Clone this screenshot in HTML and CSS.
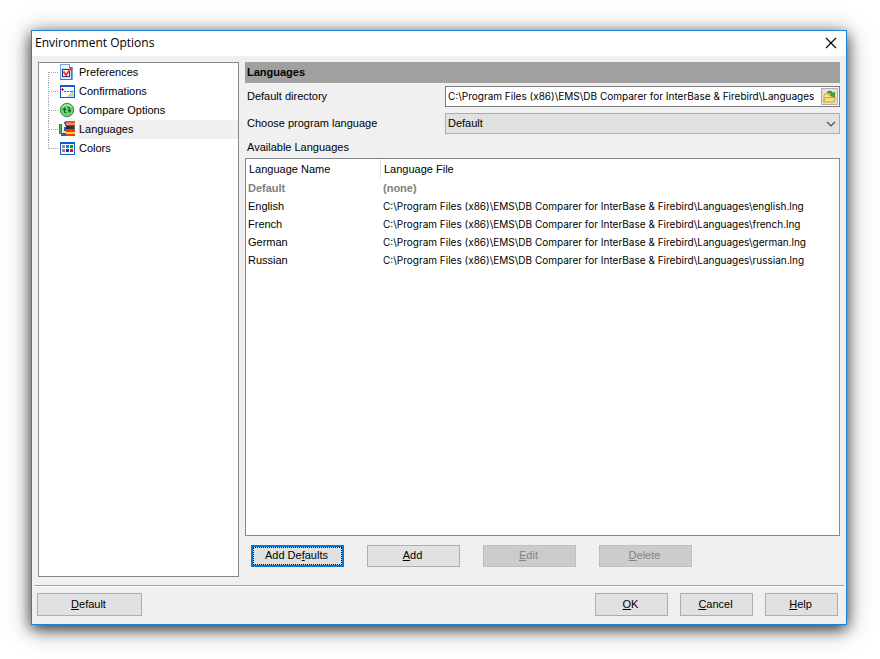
FILE: index.html
```html
<!DOCTYPE html>
<html lang="en">
<head>
<meta charset="utf-8">
<title>Environment Options</title>
<link rel="stylesheet" href="styles.css">
</head>
<body>
<main class="dialog">
  <header class="titlebar">
    <h1 class="title">Environment Options</h1>
    <button class="close" type="button" aria-label="Close">
      <svg width="12" height="12" viewBox="0 0 12 12"><path d="M1 1L11 11M11 1L1 11" stroke="#000" stroke-width="1.1" fill="none"/></svg>
    </button>
  </header>

  <div class="content">
    <nav class="tree" aria-label="Option pages">
      <ul class="tree-list">
        <li class="node"><a class="node-link" href="#preferences">
          <svg class="icon" width="18" height="18" viewBox="0 0 18 18" shape-rendering="crispEdges">
            <path d="M2.500 1.500h9l3 3v12h-12z" fill="#d6e6fb" stroke="#7f9fe0"/>
            <path d="M3 2h8v3H3z" fill="#f4f9ff"/>
            <path d="M11.500 1.500v3h3" fill="#fff" stroke="#5b86dc"/>
            <path d="M14 5v12H2v-1h11V5z" fill="#4a72cc"/>
            <rect x="4.500" y="6.500" width="7" height="7" fill="#fff" stroke="#0a3c9c"/>
            <path d="M5.500 8.500l2.500 3.500L13.500 4.500" fill="none" stroke="#f23a16" stroke-width="2" shape-rendering="auto"/>
          </svg>
          <span class="node-text">Preferences</span></a></li>
        <li class="node"><a class="node-link" href="#confirmations">
          <svg class="icon" width="18" height="18" viewBox="0 0 18 18" shape-rendering="crispEdges">
            <rect x="2" y="3" width="15" height="13" fill="#0b5fce"/>
            <rect x="3" y="5" width="13" height="10" fill="#fff"/>
            <path d="M16 8v7H8z" fill="#c4e2fb"/>
            <path d="M3 7h3v1H3zM4 6h1v3H4z" fill="#f20c18"/>
            <path d="M6 9h2v1H6zM9 9h2v1H9zM12 9h3v1h-3z" fill="#52627c"/>
            <path d="M14 11h1v3h-4v-1h3z" fill="#e6cf18"/>
          </svg>
          <span class="node-text">Confirmations</span></a></li>
        <li class="node"><a class="node-link" href="#compare">
          <svg class="icon" width="18" height="18" viewBox="0 0 18 18">
            <circle cx="9" cy="9" r="6.700" fill="#71cf76" stroke="#279238"/>
            <path d="M4.500 6Q9 1.500 13.500 6" fill="none" stroke="#a8e9a3" stroke-width="1.500"/>
            <path d="M8.500 11.500H7.500Q6.500 11.500 6.500 10.500V8M9.500 6.500H10.500Q11.500 6.500 11.500 7.500V10" fill="none" stroke="#126322" stroke-width="1.200"/>
            <path d="M4.500 9l2-3 2 3zM9.500 9l2 3 2-3z" fill="#126322"/>
          </svg>
          <span class="node-text">Compare Options</span></a></li>
        <li class="node node-selected"><a class="node-link" href="#languages" aria-current="page">
          <svg class="icon" width="18" height="18" viewBox="0 0 18 18" shape-rendering="crispEdges">
            <path d="M7 1h10v2H7z" fill="#f45132"/><path d="M7 3h10v2H7z" fill="#fa8b68"/>
            <path d="M6 2h2v4H6z" fill="#1d62e0"/>
            <path d="M1 4h4v10H1z" fill="#19923a"/><path d="M2 5h1v8H2z" fill="#3ebd55"/>
            <path d="M4 4h3v10H4z" fill="#f5f6ff"/>
            <path d="M3 13h5v3H3zM6 7h2v4H6z" fill="#1b5fe0"/>
            <path d="M5 11h3v2H5z" fill="#f6e45c"/>
            <path d="M7 5h10v1H7z" fill="#e92515"/>
            <path d="M8 6h9v3H8z" fill="#333030"/><path d="M8 9h9v3H8z" fill="#e2401a"/>
            <path d="M8 12h9v2H8z" fill="#ffc929"/><path d="M8 14h9v2H8z" fill="#ef3b20"/>
            <path d="M16 6h1v3h-1z" fill="#777"/>
          </svg>
          <span class="node-text">Languages</span></a></li>
        <li class="node"><a class="node-link" href="#colors">
          <svg class="icon" width="18" height="18" viewBox="0 0 18 18" shape-rendering="crispEdges">
            <rect x="2" y="3" width="15" height="13" fill="#0b5fce"/>
            <rect x="3" y="5" width="13" height="10" fill="#f7faff"/>
            <path d="M4 6h3v3H4z" fill="#918bcb"/><path d="M8 6h3v3H8z" fill="#087bf0"/><path d="M12 6h3v3h-3z" fill="#009d18"/>
            <path d="M4 10h3v3H4z" fill="#ec6c34"/><path d="M8 10h3v3H8z" fill="#153a96"/><path d="M12 10h3v3h-3z" fill="#cf1320"/>
          </svg>
          <span class="node-text">Colors</span></a></li>
      </ul>
    </nav>

    <section class="page">
      <h2 class="page-title">Languages</h2>
      <div class="field">
        <label class="label" for="dir">Default directory</label>
        <div class="path-box">
          <input class="path" id="dir" type="text" value="C:\Program Files (x86)\EMS\DB Comparer for InterBase &amp; Firebird\Languages">
          <button class="browse" type="button" aria-label="Browse">
            <svg width="15" height="15" viewBox="0 0 15 15">
              <path d="M2 13V6l1-1h3l1 1h5v3" fill="#fbe88c" stroke="#d29b27"/>
              <path d="M1.500 13L3.500 8.500H13.500l-1.500 4.500z" fill="#ffdf70" stroke="#d9a02c"/>
              <path d="M5 3.500Q7.500 1 10 3l.8 1.300L12.500 3.500v4.300L8.500 6.800l1-.8Q8 3.500 5 3.500z" fill="#43ad2e" stroke="#217d1a" stroke-width=".7"/>
            </svg>
          </button>
        </div>
      </div>
      <div class="field">
        <label class="label" for="lang">Choose program language</label>
        <div class="select-box">
          <select class="select" id="lang"><option>Default</option><option>English</option><option>French</option><option>German</option><option>Russian</option></select>
          <svg class="chevron" width="10" height="6" viewBox="0 0 10 6"><path d="M1 .800L5 4.800L9 .800" fill="none" stroke="#444" stroke-width="1.200"/></svg>
        </div>
      </div>
      <h3 class="caption" id="available">Available Languages</h3>
      <div class="list">
        <table class="table" aria-labelledby="available">
          <thead><tr><th class="name">Language Name</th><th>Language File</th></tr></thead>
          <tbody>
            <tr class="builtin"><td>Default</td><td>(none)</td></tr>
            <tr><td>English</td><td class="file">C:\Program Files (x86)\EMS\DB Comparer for InterBase &amp; Firebird\Languages\english.lng</td></tr>
            <tr><td>French</td><td class="file">C:\Program Files (x86)\EMS\DB Comparer for InterBase &amp; Firebird\Languages\french.lng</td></tr>
            <tr><td>German</td><td class="file">C:\Program Files (x86)\EMS\DB Comparer for InterBase &amp; Firebird\Languages\german.lng</td></tr>
            <tr><td>Russian</td><td class="file">C:\Program Files (x86)\EMS\DB Comparer for InterBase &amp; Firebird\Languages\russian.lng</td></tr>
          </tbody>
        </table>
      </div>
      <div class="actions">
        <button class="btn btn-focus" type="button"><span>Add De<u>f</u>aults</span></button>
        <button class="btn" type="button"><span><u>A</u>dd</span></button>
        <button class="btn" type="button" disabled><span><u>E</u>dit</span></button>
        <button class="btn" type="button" disabled><span><u>D</u>elete</span></button>
      </div>
    </section>
  </div>

  <footer class="footer">
    <button class="btn btn-reset" type="button"><span><u>D</u>efault</span></button>
    <button class="btn btn-end" type="button"><span><u>O</u>K</span></button>
    <button class="btn btn-end" type="button"><span><u>C</u>ancel</span></button>
    <button class="btn btn-end" type="button"><span><u>H</u>elp</span></button>
  </footer>
</main>
</body>
</html>
```
FILE: styles.css
```css
* { box-sizing: border-box; }

body {
  margin: 0;
  min-height: 100vh;
  padding: 30px 33px 34px 31px;
  display: flex;
  background: #fff;
  color: #000;
  font: 11px/14px "Liberation Sans", Arial, sans-serif;
}

button, input, select { font: inherit; color: inherit; margin: 0; border-radius: 0; }
h1, h2, h3 { margin: 0; font-size: inherit; font-weight: normal; }

.dialog {
  flex: 1;
  min-width: 0;
  display: flex;
  flex-direction: column;
  border: 1px solid #1883d7;
  background: #f0f0f0;
  box-shadow: 0 4px 14px rgba(0, 0, 0, .75), 0 4px 28px rgba(0, 0, 0, .25);
}

.titlebar {
  height: 25px;
  padding: 0 9px 1px 3px;
  display: flex;
  align-items: center;
  justify-content: space-between;
  background: #fff;
}
.title { font: 12px/16px "Open Sans", "Noto Sans", sans-serif; }
.close { display: flex; padding: 0; border: 0; background: none; }

.content {
  flex: 1;
  display: flex;
  gap: 6px;
  padding: 6px 6px 8px;
}

.tree {
  flex: 0 0 201px;
  border: 1px solid #828790;
  background: #fff;
}
.tree-list { margin: 0; padding: 0 0 0 9px; list-style: none; }
.node { height: 19px; display: flex; }
.node::before {
  content: "";
  flex: 0 0 9px;
  height: 9px;
  border-left: 1px dotted #a0a0a0;
  border-bottom: 1px dotted #a0a0a0;
}
.node:first-child::before { border-left-color: transparent; }
.node:not(:last-child) {
  background: repeating-linear-gradient(#a0a0a0 0 1px, #fff 1px 2px) 0 100% / 1px 10px no-repeat;
}
.node-link {
  flex: 1;
  display: flex;
  align-items: flex-start;
  color: inherit;
  text-decoration: none;
}
.icon { flex: none; }
.node-text { flex: 1; margin-left: 2px; padding-left: 1px; line-height: 19px; }
.node-selected .node-text { background: #f0f0f0; }

.page { flex: 1; min-width: 0; display: flex; flex-direction: column; }
.page-title {
  height: 21px;
  margin-bottom: 3px;
  padding-left: 2px;
  background: #a0a0a0;
  font-weight: bold;
  line-height: 21px;
}
.field { display: flex; align-items: center; height: 21px; margin-bottom: 6px; }
.label { flex: 0 0 200px; padding: 0 0 1px 2px; }

.path-box {
  flex: 1;
  min-width: 0;
  height: 21px;
  display: flex;
  padding: 1px;
  border: 1px solid #7a7a7a;
  background: #fff;
}
.path, .file { font-family: Inter, "Liberation Sans", sans-serif; font-size: 10px; }
.path { flex: 1; min-width: 0; padding: 0 0 1px 1px; border: 0; outline: 0; background: none; }
.browse {
  flex: none;
  display: flex;
  align-items: center;
  justify-content: center;
  width: 17px;
  padding: 0;
  border: 1px solid #adadad;
  background: #e1e1e1;
}

.select-box { flex: 1; position: relative; }
.select {
  display: block;
  width: 100%;
  height: 21px;
  padding: 0 20px 1px 2px;
  border: 1px solid #adadad;
  background: #e1e1e1;
  appearance: none;
}
.chevron { position: absolute; right: 4px; top: 8px; pointer-events: none; }

.caption { padding: 0 0 4px 2px; }
.list { flex: 1; border: 1px solid #828790; background: #fff; }
.table { width: 100%; border-collapse: collapse; table-layout: fixed; }
.table th { height: 20px; padding: 0 3px; font-weight: normal; text-align: left; }
.table .name { width: 135px; background: linear-gradient(#e5e5e5, #e5e5e5) 100% 0 / 1px 100% no-repeat; }
.table td { height: 18px; padding: 0 2px; white-space: nowrap; }
.builtin { color: #808080; font-weight: bold; }

.actions { display: flex; gap: 23px; padding: 9px 6px 10px; }
.btn {
  width: 93px;
  height: 22px;
  padding: 0 2px 2px 0;
  border: 1px solid #adadad;
  background: #e1e1e1;
  text-align: center;
}
.btn:disabled { border-color: #bfbfbf; background: #ccc; color: #838383; }
.btn-focus { border: 2px solid #0078d7; outline: 1px dotted #000; outline-offset: -3px; }
u { text-underline-offset: 1px; }

.footer {
  display: flex;
  gap: 12px;
  margin: 0 2px;
  padding: 7px 6px 8px 3px;
  border-top: 1px solid #a0a0a0;
  box-shadow: inset 0 1px #fff;
}
.footer .btn { height: 23px; padding-bottom: 1px; }
.footer .btn-reset { width: 105px; margin-right: auto; }
.footer .btn-end { width: 73px; }
```
